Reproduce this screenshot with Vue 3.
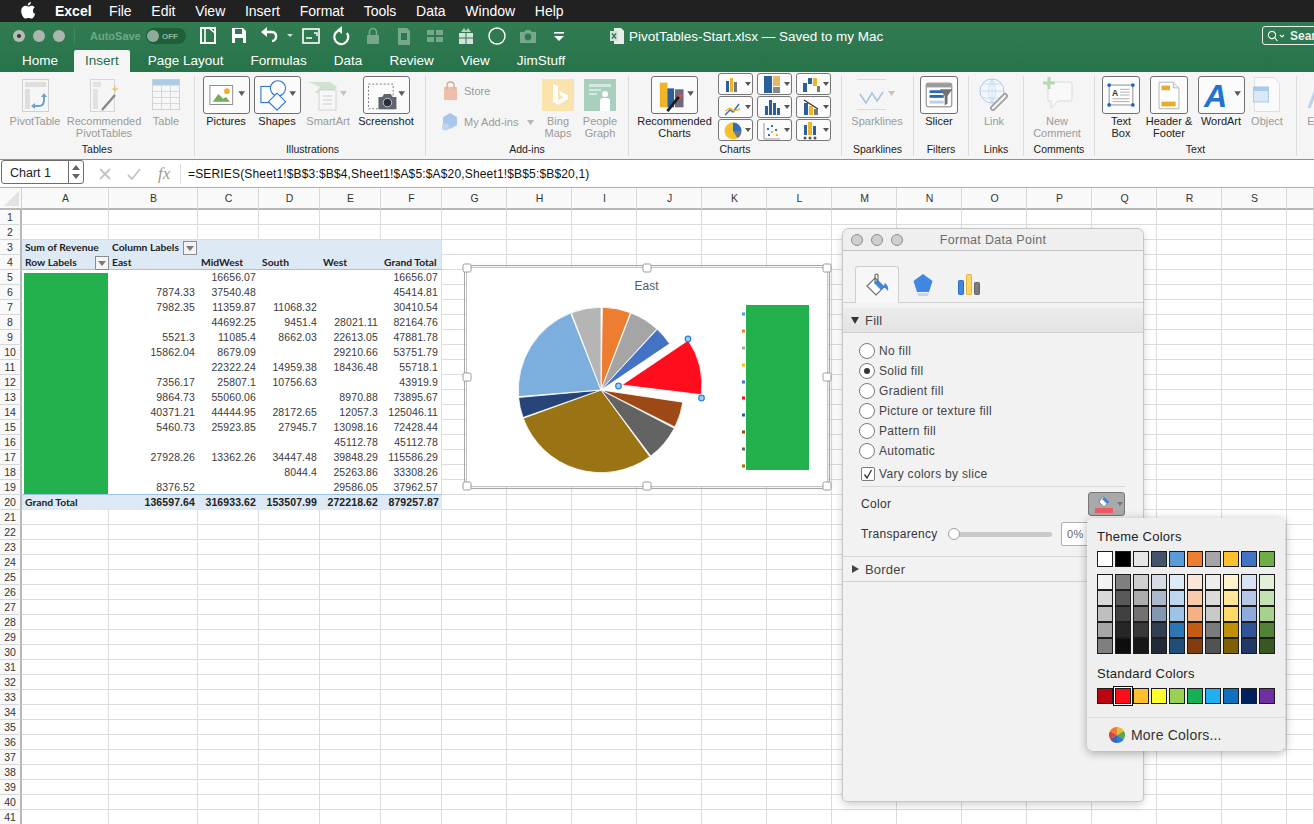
<script setup>
const menus = ['File', 'Edit', 'View', 'Insert', 'Format', 'Tools', 'Data', 'Window', 'Help']
const tabs = ['Home', 'Insert', 'Page Layout', 'Formulas', 'Data', 'Review', 'View', 'JimStuff']

const quick = [
  { w: 31, i: '<rect x="3" y="2" width="14" height="15" fill="none" stroke="#fff" stroke-width="2"/><path d="M7 2v15M11 2l6 5" stroke="#fff" stroke-width="1.6" fill="none"/>' },
  { w: 31, i: '<path d="M3 2h11l3 3v12H3z" fill="#fff"/><rect x="6" y="3" width="7" height="5" fill="#2e7850"/><rect x="6" y="12" width="8" height="5" fill="#2e7850"/>' },
  { w: 41, i: '<path d="M12 15c5 0 6-9 0-9H6" fill="none" stroke="#fff" stroke-width="2.4"/><path d="M7 1v10L1 6z" fill="#fff"/><path d="M27 8h6l-3 3z" fill="#cfe0d6"/>' },
  { w: 31, i: '<rect x="2" y="3" width="16" height="14" fill="none" stroke="#fff" stroke-width="1.6"/><path d="M5 12h6M13 7h3v3" stroke="#fff" stroke-width="1.4" fill="none"/>' },
  { w: 31, i: '<path d="M9 4a7 7 0 1 0 6 3" fill="none" stroke="#fff" stroke-width="2.2"/><path d="M10 0v8l-5-4z" fill="#fff"/>' },
  { w: 31, o: 0.35, i: '<rect x="4" y="9" width="12" height="9" rx="1" fill="#fff"/><path d="M6.5 9V6a3.5 3.5 0 0 1 7 0v3" fill="none" stroke="#fff" stroke-width="1.6"/>' },
  { w: 31, o: 0.35, i: '<path d="M4 2h9l3 3v14H4z" fill="#fff"/><rect x="7" y="7" width="6" height="7" fill="#2e7850"/>' },
  { w: 31, o: 0.35, i: '<rect x="2" y="4" width="7" height="5" fill="#fff"/><rect x="11" y="4" width="7" height="5" fill="#fff"/><rect x="2" y="11" width="7" height="5" fill="#fff"/><rect x="11" y="11" width="7" height="5" fill="#fff"/>' },
  { w: 31, o: 0.8, i: '<path d="M3 7h14v11H3z" fill="#fff"/><path d="M10 7v11M3 12h14" stroke="#2e7850"/><path d="M5 6l3-4 2 3 2-3 3 4z" fill="#dfe9e3"/>' },
  { w: 31, i: '<circle cx="10" cy="10" r="8" fill="none" stroke="#fff" stroke-width="1.4"/>' },
  { w: 31, o: 0.35, i: '<path d="M2 6h4l2-2h4l2 2h4v11H2z" fill="#fff"/><circle cx="10" cy="11" r="3.4" fill="#2e7850"/>' },
  { w: 31, i: '<path d="M5 6h10v1.6H5z" fill="#fff"/><path d="M5 10h10l-5 5z" fill="#fff"/>' }
]

const caret = (x, y, off) => `<path d="M${x} ${y}h7l-3.5 5z" fill="${off ? '#c4c4c4' : '#5a5a5a'}"/>`

const icons = {
  pivot: '<rect x=".5" y="3.5" width="26" height="32" fill="#f6f6f6" stroke="#cfcfcf"/><rect x="3" y="6" width="21" height="5" fill="#dedede"/><rect x="3" y="13" width="5" height="20" fill="#dedede"/><path d="M12 30h5q5 0 5-6v-4" fill="none" stroke="#6ea2cf" stroke-width="2"/><path d="M19 21l3-4 3 4zM13 27v6l-4-3z" fill="#6ea2cf"/>',
  recPivot: '<rect x=".5" y="3.5" width="24" height="32" fill="#f6f6f6" stroke="#d6d6d6"/><rect x="3" y="6" width="8" height="5" fill="#e2e2e2"/><rect x="3" y="13" width="5" height="20" fill="#e2e2e2"/><path d="M12 34l13-15" stroke="#888" stroke-width="2.4"/><path d="M25 9l1 3 3 1-3 1-1 3-1-3-3-1 3-1z" fill="#eac77a"/>',
  table: '<rect x=".5" y="3.5" width="27" height="30" fill="#f7f7f7" stroke="#d2d2d2"/><rect x=".5" y="3.5" width="27" height="6" fill="#aecbe6"/><path d="M9.5 9v24M18.5 9v24M1 15.5h26M1 21.5h26M1 27.5h26" stroke="#d8d8d8"/>',
  pictures: '<rect x="6" y="9" width="24" height="20" fill="#fff" stroke="#8a8a8a"/><circle cx="24" cy="15" r="3" fill="#f2ae2a"/><path d="M9 26l6-8 5 5 3-2 4 5z" fill="#72ad5a"/>',
  shapes: '<rect x="6" y="10" width="17" height="17" fill="#fff" stroke="#2e78c8" stroke-width="1.2"/><circle cx="24" cy="12" r="8" fill="#fff" stroke="#2e78c8" stroke-width="1.2"/><path d="M23 17l9 9-9 9-9-9z" fill="#fff" stroke="#2e78c8" stroke-width="1.2"/>',
  smartart: '<path d="M1 6h22l7 5-6 6H8l5-6z" fill="#cfe3cf"/><rect x="12" y="14" width="17" height="20" fill="#f7f7f7" stroke="#d2d2d2"/><path d="M16 20h9M16 24h9M16 28h9" stroke="#cfcfcf"/>',
  screenshot: '<rect x="4.5" y="7.5" width="26" height="26" fill="none" stroke="#777" stroke-dasharray="2 2"/><path d="M15 21h4l2-3h7l2 3h4v13H15z" fill="#5f6570"/><circle cx="24.5" cy="27" r="4.5" fill="#2a2f38" stroke="#c9ced6"/>',
  bing: '<rect y="3" width="32" height="32" fill="#fbe3ae"/><path d="M11 8l5 2v14l6-3-3-1-2-5 9 4v4l-10 6-5-3z" fill="#fff"/>',
  people: '<rect y="3" width="32" height="32" fill="#a9d0bf"/><path d="M5 8h22v3H5zM5 13h12v2H5zM5 17h8v2H5z" fill="#d6e9e0"/><circle cx="21" cy="18" r="3" fill="#fff"/><path d="M16 35v-10q0-3 3-3h4q3 0 3 3v10z" fill="#fff"/>',
  recCharts: '<rect x="8" y="6" width="8" height="26" fill="#f0b429"/><rect x="16" y="12" width="7" height="20" fill="#2a5f9e"/><rect x="24" y="13" width="9" height="19" fill="#6d6a7d"/><path d="M16 36l12-15" stroke="#1c1c1c" stroke-width="3"/><path d="M30 17l1 2 2 1-2 1-1 2-1-2-2-1 2-1z" fill="#e34d4d"/>',
  sparklines: '<path d="M0 3.5h29M0 33.5h29" stroke="#d3dbe6"/><path d="M3 18l6 9 6-10 5 8 6-9" fill="none" stroke="#a8c4e0" stroke-width="1.6"/>',
  slicer: '<rect x="5.5" y="6.5" width="27" height="25" rx="2" fill="#fff" stroke="#777"/><rect x="6" y="7" width="26" height="4" fill="#9b9b9b"/><rect x="9" y="14" width="15" height="3" fill="#2b69b0"/><rect x="9" y="19" width="15" height="3" fill="#2b69b0"/><rect x="9" y="25" width="15" height="3" fill="#bcd0e6"/><path d="M20 13h13l-5 7v8l-3 2v-10z" fill="#6e7278"/>',
  link: '<circle cx="13" cy="15" r="12" fill="#f4f8fd" stroke="#a9c9ec"/><path d="M1 15h24M13 3v24M4 8h18M4 22h18M13 3q-7 12 0 24M13 3q7 12 0 24" fill="none" stroke="#bcd6f0" stroke-width=".8"/><path d="M14 32l12-12" stroke="#a2a2a2" stroke-width="6" stroke-linecap="round"/><path d="M14 32l12-12" stroke="#f4f4f4" stroke-width="2.4" stroke-linecap="round"/>',
  comment: '<path d="M6 6h22q2 0 2 2v15q0 2-2 2H16l-7 7v-7H6z" fill="#f9f9f9" stroke="#dadada"/><path d="M7 1v12M1 7h12" stroke="#b5d8b5" stroke-width="3"/>',
  textbox: '<rect x="6.5" y="8.5" width="25" height="21" fill="#fff" stroke="#8a8a8a"/><circle cx="6.5" cy="8.5" r="2" fill="#2466c2"/><circle cx="31.5" cy="8.5" r="2" fill="#2466c2"/><circle cx="6.5" cy="29.5" r="2" fill="#2466c2"/><circle cx="31.5" cy="29.5" r="2" fill="#2466c2"/><text x="9.5" y="20" font-family="Liberation Sans" font-size="9" font-weight="700" fill="#333">A</text><path d="M18 13h10M18 16h10M18 19h10M10 23h18M10 26h18" stroke="#aaa"/>',
  header: '<path d="M8.5 5.5h15l6 6v22h-21z" fill="#fff" stroke="#b5b5b5"/><path d="M23.5 5.5v6h6" fill="#eee" stroke="#b5b5b5"/><rect x="11" y="9" width="9" height="5" fill="#e8ab2a"/><rect x="11" y="26" width="15" height="5" fill="#e8ab2a"/>',
  wordart: '<text x="5" y="32" font-family="Liberation Sans" font-size="34" font-weight="700" font-style="italic" fill="#2272cf">A</text>',
  object: '<path d="M1.500 1.500h19l6 6v28h-25z" fill="#fafafa" stroke="#dedede"/><rect x=".5" y="11" width="15" height="15" fill="#d8e8f6" stroke="#a9c9ea"/><rect x=".5" y="11" width="15" height="4" fill="#a9c9ea"/>',
  edit: '<path d="M5 32l9-24" stroke="#bcd2ea" stroke-width="3"/>'
}

const groups = [
  { title: 'Tables', w: 195, tools: [
    { w: 70, iw: 27, i: 'pivot', off: true, label: ['PivotTable'] },
    { w: 68, iw: 29, i: 'recPivot', off: true, label: ['Recommended', 'PivotTables'] },
    { w: 56, iw: 28, i: 'table', off: true, label: ['Table'] }
  ] },
  { title: 'Illustrations', w: 231, pad: 5, tools: [
    { w: 52, iw: 47, i: 'pictures', box: true, car: 36, label: ['Pictures'] },
    { w: 50, iw: 47, i: 'shapes', box: true, car: 36, label: ['Shapes'] },
    { w: 52, iw: 42, i: 'smartart', off: true, car: 33, label: ['SmartArt'] },
    { w: 64, iw: 47, i: 'screenshot', box: true, car: 36, label: ['Screenshot'] }
  ] },
  { title: 'Add-ins', w: 203, addins: true, tools: [
    { w: 42, iw: 32, i: 'bing', off: true, label: ['Bing', 'Maps'] },
    { w: 42, iw: 32, i: 'people', off: true, label: ['People', 'Graph'] }
  ] },
  { title: 'Charts', w: 213, charts: true, tools: [
    { w: 91, iw: 47, i: 'recCharts', box: true, car: 37, label: ['Recommended', 'Charts'] }
  ] },
  { title: 'Sparklines', w: 72, tools: [
    { w: 70, iw: 40, i: 'sparklines', off: true, car: 31, label: ['Sparklines'] }
  ] },
  { title: 'Filters', w: 55, tools: [{ w: 50, iw: 38, i: 'slicer', box: true, label: ['Slicer'] }] },
  { title: 'Links', w: 55, tools: [{ w: 50, iw: 30, i: 'link', off: true, label: ['Link'] }] },
  { title: 'Comments', w: 71, tools: [{ w: 66, iw: 31, i: 'comment', off: true, label: ['New', 'Comment'] }] },
  { title: 'Text', w: 202, tools: [
    { w: 52, iw: 38, i: 'textbox', box: true, label: ['Text', 'Box'] },
    { w: 44, iw: 38, i: 'header', box: true, label: ['Header &', 'Footer'] },
    { w: 60, iw: 47, i: 'wordart', box: true, car: 37, label: ['WordArt'] },
    { w: 32, iw: 28, i: 'object', off: true, label: ['Object'] }
  ] }
]

const miniCharts = [
  '<rect x="3" y="7" width="3" height="11" fill="#2a5f9e"/><rect x="7" y="4" width="3" height="14" fill="#f0b429"/><rect x="11" y="8" width="3" height="10" fill="#777"/>',
  '<rect x="2" y="2" width="8" height="17" fill="#2a5f9e"/><rect x="11" y="2" width="7" height="10" fill="#eab765"/><rect x="11" y="13" width="7" height="6" fill="#8a8a8a"/>',
  '<path d="M2 9h4v9H2zM7 4h4v6H7z" fill="#2a5f9e"/><path d="M12 4h4v8h-4z" fill="#f0b429"/><rect x="16" y="12" width="3" height="6" fill="#777"/>',
  '<path d="M2 18l5-5 3 2 6-8" fill="none" stroke="#2a6fc0" stroke-width="1.4"/><path d="M2 14l5-3 4 3 6-2" fill="none" stroke="#f0b429" stroke-width="1.4"/>',
  '<rect x="3" y="9" width="3" height="9" fill="#2a5f9e"/><rect x="7" y="3" width="3" height="15" fill="#2a5f9e"/><rect x="11" y="6" width="3" height="12" fill="#2a5f9e"/><rect x="15" y="11" width="3" height="7" fill="#2a5f9e"/>',
  '<path d="M3 3l14 9" stroke="#333" stroke-width="1.2"/><rect x="3" y="6" width="4" height="12" fill="#2a5f9e"/><rect x="8" y="9" width="4" height="9" fill="#f0b429"/><rect x="13" y="12" width="4" height="6" fill="#777"/>',
  '<circle cx="10" cy="11" r="8.500" fill="#f5c12e"/><path d="M10 11V2.500a8.500 8.500 0 0 1 8.500 8.500z" fill="#2a6fc0"/><path d="M10 11h8.500a8.500 8.500 0 0 1-4 7.200z" fill="#777"/>',
  '<path d="M2 3v16h16" fill="none" stroke="#999"/><path d="M5 8h2v2H5zM9 5h2v2H9zM13 9h2v2h-2zM6 14h2v2H6z" fill="#2a6fc0"/><path d="M9 11h2v2H9zM14 14h2v2h-2z" fill="#f0b429"/>',
  '<rect x="3" y="5" width="3" height="10" fill="#2a5f9e"/><rect x="7" y="2" width="4" height="13" fill="#f0b429"/><rect x="12" y="6" width="3" height="9" fill="#2a5f9e"/><circle cx="4" cy="18" r="1.500" fill="#555"/><circle cx="9" cy="18" r="1.500" fill="#555"/><circle cx="14" cy="18" r="1.500" fill="#555"/>'
]

const colWidths = [87, 89, 61, 61, 61, 61, ...Array(13).fill(65), 27]
const colNames = ['A', 'B', 'C', 'D', 'E', 'F', 'G', 'H', 'I', 'J', 'K', 'L', 'M', 'N', 'O', 'P', 'Q', 'R', 'S', '']
const rowNums = Array.from({ length: 41 }, (_, i) => i + 1)

const pivot = {
  3: ['Sum of Revenue', 'Column Labels', '', '', '', ''],
  4: ['Row Labels', 'East', 'MidWest', 'South', 'West', 'Grand Total'],
  5: ['', '', '16656.07', '', '', '16656.07'],
  6: ['', '7874.33', '37540.48', '', '', '45414.81'],
  7: ['', '7982.35', '11359.87', '11068.32', '', '30410.54'],
  8: ['', '', '44692.25', '9451.4', '28021.11', '82164.76'],
  9: ['', '5521.3', '11085.4', '8662.03', '22613.05', '47881.78'],
  10: ['', '15862.04', '8679.09', '', '29210.66', '53751.79'],
  11: ['', '', '22322.24', '14959.38', '18436.48', '55718.1'],
  12: ['', '7356.17', '25807.1', '10756.63', '', '43919.9'],
  13: ['', '9864.73', '55060.06', '', '8970.88', '73895.67'],
  14: ['', '40371.21', '44444.95', '28172.65', '12057.3', '125046.11'],
  15: ['', '5460.73', '25923.85', '27945.7', '13098.16', '72428.44'],
  16: ['', '', '', '', '45112.78', '45112.78'],
  17: ['', '27928.26', '13362.26', '34447.48', '39848.29', '115586.29'],
  18: ['', '', '', '8044.4', '25263.86', '33308.26'],
  19: ['', '8376.52', '', '', '29586.05', '37962.57'],
  20: ['Grand Total', '136597.64', '316933.62', '153507.99', '272218.62', '879257.87']
}

function cellClass(r, c) {
  const inPivot = c < 6
  return {
    head: inPivot && (r === 3 || r === 4),
    headLast: inPivot && r === 4,
    plain: inPivot && r >= 5 && r <= 19,
    lastCol: c === 5,
    total: inPivot && r === 20,
    totalLabel: c === 0 && r === 20,
    aboveTotal: inPivot && r === 19,
    num: inPivot && r >= 5 && c > 0
  }
}

// slices go clockwise, angles in degrees from twelve o'clock
const pie = [
  { a: 1, b: 20.8, c: '#ed7d31' },
  { a: 21.3, b: 42.4, c: '#a5a5a5' },
  { a: 42.8, b: 56, c: '#4472c4' },
  { a: 56, b: 97, c: '#ff0d1c', out: 21.500, r: 80 },
  { a: 98.5, b: 116.6, c: '#9e4816' },
  { a: 117.6, b: 143, c: '#636363' },
  { a: 143.8, b: 250, c: '#997314' },
  { a: 250.6, b: 264.8, c: '#264478' },
  { a: 265.4, b: 338.4, c: '#7cafdd' },
  { a: 339, b: 360, c: '#b5b5b5' }
]

function polar(cx, cy, r, deg) {
  const t = (deg * Math.PI) / 180
  return [(cx + r * Math.sin(t)).toFixed(1), (cy - r * Math.cos(t)).toFixed(1)]
}

function slicePath(s) {
  const r = s.r || 82.7
  const [ox, oy] = s.out ? polar(601, 390, s.out, (s.a + s.b) / 2) : [601, 390]
  const p0 = polar(+ox, +oy, r, s.a)
  const p1 = polar(+ox, +oy, r, s.b)
  const big = s.b - s.a > 180 ? 1 : 0
  return `M${ox} ${oy}L${p0[0]} ${p0[1]}A${r} ${r} 0 ${big} 1 ${p1[0]} ${p1[1]}Z`
}

const legend = [
  [314, '#5b9bd5'], [331, '#ed7d31'], [348, '#a5a5a5'], [365, '#ffc000'], [382, '#4472c4'],
  [398, '#ff0d1c'], [415, '#255e91'], [432, '#9e480e'], [449, '#636363'], [466, '#997300']
]

const handles = [
  [0, 0], [50, 0], [100, 0], [0, 50], [100, 50], [0, 100], [50, 100], [100, 100]
]

const fills = [
  { label: 'No fill' },
  { label: 'Solid fill', on: true },
  { label: 'Gradient fill' },
  { label: 'Picture or texture fill' },
  { label: 'Pattern fill' },
  { label: 'Automatic' }
]

const themeRow = ['#ffffff', '#000000', '#e7e6e6', '#44546a', '#5b9bd5', '#ed7d31', '#a5a5a5', '#ffc02e', '#4472c4', '#70ad47']
const shades = [
  '#f2f2f2', '#d9d9d9', '#bfbfbf', '#a6a6a6', '#7f7f7f',
  '#7f7f7f', '#595959', '#404040', '#262626', '#0d0d0d',
  '#d0cece', '#aeabab', '#767171', '#3b3838', '#181717',
  '#d6dce5', '#adb9ca', '#8497b0', '#333f50', '#222a35',
  '#deebf7', '#bdd7ee', '#9dc3e6', '#2e75b6', '#1f4e79',
  '#fbe5d6', '#f8cbad', '#f4b183', '#c55a11', '#843c0c',
  '#ededed', '#dbdbdb', '#c9c9c9', '#7b7b7b', '#525252',
  '#fff2cc', '#ffe699', '#ffd966', '#bf9000', '#7f6000',
  '#dae3f3', '#b4c7e7', '#8faadc', '#2f5597', '#203864',
  '#e2f0d9', '#c5e0b4', '#a9d18e', '#548235', '#385723'
]
const standard = ['#bb0612', '#ff0d1c', '#ffc02e', '#ffff2e', '#99d152', '#17b052', '#1fb0f0', '#1070bd', '#00205f', '#6e30a0']
</script>

<template>
  <div class="page">
    <div class="menubar">
      <svg class="apple" width="16" height="18" viewBox="0 0 16 18">
        <path d="M11 1c0 2-1.600 3.500-3.300 3.400C7.600 2.600 9.300 1.100 11 1zM13 9.500c0-2 1.500-3 1.700-3.100-1-1.400-2.400-1.600-3-1.600-1.300-.1-2.500.8-3.100.8-.7 0-1.700-.8-2.800-.8C4.300 4.800 1.200 6 1.200 10.200c0 3.300 2.500 7.400 4.400 7.400 1 0 1.600-.7 2.900-.7s1.800.7 2.900.7c1.800 0 3.300-3.200 3.700-4.700-2-.8-2.100-2.700-2.100-3.400z" fill="#fff"/>
      </svg>
      <span class="app-name">Excel</span>
      <span v-for="m in menus" :key="m" class="menu">{{ m }}</span>
    </div>

    <div class="titlebar">
      <div class="title-row">
        <div class="lights">
          <span class="light dot"></span>
          <span class="light"></span>
          <span class="light"></span>
        </div>
        <span class="autosave">AutoSave</span>
        <span class="toggle"><i></i>OFF</span>
        <div class="quick">
          <span v-for="(q, n) in quick" :key="n" class="quick-slot" :style="{ width: q.w + 'px', opacity: q.o || 1 }">
            <svg :width="q.w - 3" height="20" :viewBox="`0 0 ${q.w - 3} 20`" v-html="q.i"></svg>
          </span>
        </div>
        <div class="docname">
          <svg width="14" height="16" viewBox="0 0 14 16">
            <path d="M4 0h7l3 3v13H4z" fill="#e6efe9"/>
            <rect y="3" width="8" height="10" fill="#cfe0d6"/>
            <path d="M2 5.500l4 5M6 5.500l-4 5" stroke="#2e7850" stroke-width="1.300"/>
          </svg>
          <span>PivotTables-Start.xlsx — Saved to my Mac</span>
        </div>
        <div class="search">
          <svg width="20" height="12" viewBox="0 0 20 12">
            <circle cx="5" cy="5" r="3.600" fill="none" stroke="#fff" stroke-width="1.100"/>
            <path d="M7.500 7.500l3 3.500M13 5l2 2 2-2" fill="none" stroke="#fff" stroke-width="1.100"/>
          </svg>
          <span>Search</span>
        </div>
      </div>
      <div class="tabs">
        <span v-for="t in tabs" :key="t" class="tab" :class="{ active: t === 'Insert' }">{{ t }}</span>
      </div>
    </div>

    <div class="ribbon">
      <section v-for="g in groups" :key="g.title" class="group" :style="{ width: g.w + 'px', paddingLeft: (g.pad || 0) + 'px' }">
        <div class="tools">
          <div v-if="g.addins" class="addin-stack">
            <div class="addin-row">
              <svg width="17" height="20" viewBox="0 0 17 20">
                <path d="M2 6h13v13H2z" fill="#ecbfab"/>
                <path d="M5 8V4q0-3 3.500-3T12 4v4" fill="none" stroke="#dba68f" stroke-width="1.300"/>
              </svg>
              <span>Store</span>
            </div>
            <div class="addin-row">
              <svg width="17" height="20" viewBox="0 0 17 20">
                <path d="M8 1l7 4v8l-7 4-7-4V5z" fill="#a8c7ea"/>
                <circle cx="3.500" cy="15" r="3.500" fill="#bdd5f0"/>
              </svg>
              <span>My Add-ins</span>
              <svg class="addin-caret" width="7" height="5" viewBox="0 0 7 5"><path d="M0 0h7L3.500 5z" fill="#b5b5b5"/></svg>
            </div>
          </div>
          <div v-for="t in g.tools" :key="t.i" class="tool" :class="{ off: t.off }" :style="{ width: t.w + 'px' }">
            <div class="tool-icon" :class="{ box: t.box }" :style="{ width: t.iw + 'px' }">
              <svg :width="t.box ? t.iw - 2 : t.iw" :height="t.box ? 36 : 38" :viewBox="`0 0 ${t.iw} 38`"
                v-html="icons[t.i] + (t.car ? caret(t.car, 15, t.off) : '')"></svg>
            </div>
            <span v-for="l in t.label" :key="l" class="tool-label">{{ l }}</span>
          </div>
          <div v-if="g.charts" class="mini-grid">
            <span v-for="(m, n) in miniCharts" :key="n" class="mini">
              <svg width="20" height="20" viewBox="0 0 20 20" v-html="m"></svg>
              <svg width="6" height="4" viewBox="0 0 6 4"><path d="M0 0h6L3 4z" fill="#555"/></svg>
            </span>
          </div>
        </div>
        <div class="group-title">{{ g.title }}</div>
      </section>
      <section class="group last">
        <div class="tool off">
          <div class="tool-icon"><svg width="20" height="38" viewBox="0 0 20 38" v-html="icons.edit"></svg></div>
          <span class="tool-label">Ed</span>
        </div>
      </section>
    </div>

    <div class="formula-bar">
      <div class="namebox">
        <span class="name-text">Chart 1</span>
        <div class="stepper">
          <svg width="8" height="16" viewBox="0 0 8 16">
            <path d="M0 6l4-5 4 5zM0 10h8l-4 5z" fill="#666"/>
          </svg>
        </div>
      </div>
      <svg class="fx-btn" width="14" height="14" viewBox="0 0 14 14"><path d="M2 2l10 10M12 2L2 12" stroke="#c4c4c4" stroke-width="1.800"/></svg>
      <svg class="fx-btn check" width="16" height="14" viewBox="0 0 16 14"><path d="M2 8l4 4 8-10" fill="none" stroke="#c4c4c4" stroke-width="1.800"/></svg>
      <span class="fx">fx</span>
      <span class="formula">=SERIES(Sheet1!$B$3:$B$4,Sheet1!$A$5:$A$20,Sheet1!$B$5:$B$20,1)</span>
    </div>

    <div class="sheet">
      <div class="corner"><i></i></div>
      <div v-for="(w, c) in colWidths" :key="c" class="col-head">{{ colNames[c] }}</div>
      <template v-for="r in rowNums" :key="r">
        <div class="row-head">{{ r }}</div>
        <div v-for="(w, c) in colWidths" :key="c" class="cell" :class="cellClass(r, c)">
          <span>{{ pivot[r] ? pivot[r][c] : '' }}</span>
        </div>
      </template>
      <div class="filter-btn col-filter"><i></i></div>
      <div class="filter-btn row-filter"><i></i></div>
      <div class="redacted"></div>
    </div>

    <div class="chart">
      <svg class="chart-svg" width="360" height="218" viewBox="467 268 360 218">
        <path v-for="s in pie" :key="s.c" :d="slicePath(s)" :fill="s.c" stroke="#fff" stroke-width=".8" />
        <text x="646.500" y="290" text-anchor="middle" class="chart-title">East</text>
        <rect v-for="l in legend" :key="l[0]" x="742" :y="l[0] - 1.500" width="3" height="3" :fill="l[1]" />
        <rect x="746" y="305" width="63" height="165" fill="#23b14d" />
        <g fill="#9ccbf0" stroke="#2a83d8" stroke-width="1.200">
          <circle cx="688" cy="339" r="2.800" />
          <circle cx="701.500" cy="398" r="2.800" />
          <circle cx="618.500" cy="386" r="2.800" />
        </g>
      </svg>
      <span v-for="h in handles" :key="h.join()" class="handle" :style="{ left: h[0] + '%', top: h[1] + '%' }"></span>
    </div>

    <div class="panel">
      <div class="panel-title">
        <div class="panel-lights"><i></i><i></i><i></i></div>
        <span>Format Data Point</span>
      </div>
      <div class="panel-tabs">
        <div class="panel-tab active">
          <svg width="26" height="26" viewBox="0 0 26 26">
            <path d="M11 6l9 9-8 8-9-9z" fill="#fff" stroke="#6d6d6d" stroke-width="1.200"/>
            <path d="M13 8l7 7-3 3-7-7z" fill="#3f87d8"/>
            <path d="M11 11V3q2-2 3 0v6" fill="none" stroke="#666" stroke-width="1.100"/>
            <path d="M21 11q4 3 3 8-2-3-5-4z" fill="#3f87d8"/>
          </svg>
        </div>
        <div class="panel-tab">
          <svg width="22" height="26" viewBox="0 0 22 26">
            <path d="M11 2l9.500 7-3.500 11H5L1.500 9z" fill="#3f87e0"/>
            <path d="M5 21h12l-1.500 3h-9z" fill="#bcd6f3"/>
          </svg>
        </div>
        <div class="panel-tab">
          <svg width="24" height="22" viewBox="0 0 24 22">
            <rect x="1.500" y="6.500" width="5" height="14" rx=".8" fill="#3f87e0" stroke="#2f6fc0"/>
            <rect x="9.500" y=".5" width="5" height="20" rx=".8" fill="#fcd664" stroke="#e3b63c"/>
            <rect x="17.500" y="8.500" width="5" height="12" rx=".8" fill="#7c7c7c" stroke="#666"/>
          </svg>
        </div>
      </div>

      <div class="section-head open"><i></i>Fill</div>
      <div class="section-body">
        <label v-for="f in fills" :key="f.label" class="radio-row">
          <span class="radio" :class="{ on: f.on }"></span>{{ f.label }}
        </label>
        <label class="check-row">
          <span class="checkbox">
            <svg width="12" height="12" viewBox="0 0 12 12"><path d="M2.500 6.500l2.500 3.500 4.500-8" fill="none" stroke="#333" stroke-width="1.300"/></svg>
          </span>Vary colors by slice
        </label>
        <div class="rule"></div>
        <div class="color-row">
          <span>Color</span>
          <div class="color-btn">
            <svg width="20" height="20" viewBox="0 0 20 20">
              <path d="M9 2l6 6-5 5-5-5z" fill="#fff" stroke="#777" stroke-width=".8"/>
              <path d="M10 3l5 5-2 2-5-5z" fill="#3f87d8"/>
              <rect x="1" y="14" width="18" height="5" fill="#ee5a66"/>
            </svg>
            <svg width="6" height="4" viewBox="0 0 6 4"><path d="M0 0h6L3 4z" fill="#777"/></svg>
          </div>
        </div>
        <div class="transparency-row">
          <span>Transparency</span>
          <div class="slider"><i></i></div>
          <div class="percent">0%</div>
        </div>
      </div>
      <div class="section-head closed"><i></i>Border</div>
    </div>

    <div class="popover">
      <div class="pop-title">Theme Colors</div>
      <div class="swatches">
        <span v-for="c in themeRow" :key="c" class="swatch" :style="{ background: c }"></span>
      </div>
      <div class="swatches shades">
        <span v-for="(c, n) in shades" :key="n" class="swatch" :style="{ background: c }"></span>
      </div>
      <div class="pop-title standard-title">Standard Colors</div>
      <div class="swatches">
        <span v-for="c in standard" :key="c" class="swatch" :class="{ picked: c === '#ff0d1c' }" :style="{ background: c }"></span>
      </div>
      <div class="more">
        <svg width="16" height="16" viewBox="0 0 16 16">
          <path d="M8 8V0a8 8 0 0 1 6.900 4z" fill="#f5b92e"/>
          <path d="M8 8l6.900-4a8 8 0 0 1 0 8z" fill="#58a845"/>
          <path d="M8 8l6.900 4A8 8 0 0 1 8 16z" fill="#2d7fd0"/>
          <path d="M8 8v8a8 8 0 0 1-6.900-4z" fill="#3a62b8"/>
          <path d="M8 8l-6.900 4a8 8 0 0 1 0-8z" fill="#d8433b"/>
          <path d="M8 8L1.100 4A8 8 0 0 1 8 0z" fill="#ee7d31"/>
        </svg>
        <span>More Colors...</span>
      </div>
    </div>
  </div>
</template>

<style>
html, body { margin: 0; overflow: hidden; background: #fff; }
</style>

<style scoped>
.page {
  position: relative;
  width: 1314px;
  height: 824px;
  overflow: hidden;
  display: flex;
  flex-direction: column;
  font-family: "Liberation Sans", Arial, sans-serif;
  color: #222;
}

.menubar {
  flex: none;
  height: 22px;
  background: #212121;
  color: #fff;
  display: flex;
  align-items: center;
  font-size: 14px;
  padding-left: 20px;
}
.apple { margin-right: 19px; margin-top: -2px; }
.app-name { font-weight: 700; margin-right: 17.500px; }
.menu { margin-right: 19.700px; }

.titlebar {
  flex: none;
  height: 50px;
  background: linear-gradient(#327c52, #27734a);
}
.title-row {
  height: 28px;
  display: flex;
  align-items: center;
  padding-top: 0;
  position: relative;
}
.lights { display: flex; gap: 8px; margin-left: 13px; padding-right: 9px; border-right: 1px solid #3d8a5e; height: 18px; align-items: center; }
.light { width: 12px; height: 12px; border-radius: 50%; background: #a9b5ad; box-sizing: border-box; position: relative; }
.light.dot { background: #b5bdb8; }
.light.dot::after { content: ""; position: absolute; left: 4px; top: 4px; width: 4px; height: 4px; border-radius: 50%; background: #333; }
.autosave { margin-left: 15px; font-size: 11px; font-weight: 700; color: #6fa888; width: 56px; }
.toggle {
  width: 40px; height: 16px; border-radius: 8px; background: #1f6039; box-sizing: border-box;
  display: flex; align-items: center; gap: 3px; padding-left: 1px; color: #8fb8a1; font-size: 8px; font-weight: 700;
}
.toggle i { width: 12px; height: 12px; border-radius: 50%; background: #8fa99a; }
.quick { display: flex; margin-left: 10px; }
.quick-slot { display: flex; justify-content: center; align-items: center; }
.docname { position: absolute; left: 610px; top: 6px; display: flex; align-items: center; gap: 5px; color: #fff; font-size: 13.500px; }
.search {
  position: absolute; left: 1262px; top: 4px; width: 80px; height: 19px; box-sizing: border-box;
  border: 1px solid #e8f0eb; border-radius: 3px; display: flex; align-items: center; gap: 3px; padding-left: 4px;
  color: #e8f0eb; font-size: 12px; font-weight: 700;
}

.tabs { height: 22px; display: flex; padding-left: 8.500px; }
.tab { padding: 0 13.500px; line-height: 21px; color: #fff; font-size: 13.500px; }
.tab.active { background: #f5f5f5; color: #1f6e45; padding: 0 11px; margin: 0 4.500px 0 2.500px; border-radius: 2px 2px 0 0; }

.ribbon {
  flex: none;
  height: 88px;
  box-sizing: border-box;
  background: #f5f5f5;
  border-bottom: 1px solid #8f8f8f;
  display: flex;
  overflow: hidden;
}
.group { flex: none; box-sizing: border-box; height: 80px; margin-top: 4px; border-right: 1px solid #dcdcdc; display: flex; flex-direction: column; }
.group.last { border: 0; padding-left: 4px; width: 30px; }
.tools { flex: 1; display: flex; min-height: 0; }
.group-title { height: 13px; text-align: center; font-size: 10.500px; line-height: 13px; color: #222; }
.tool { flex: none; display: flex; flex-direction: column; align-items: center; font-size: 11px; line-height: 12px; white-space: nowrap; }
.tool.off { color: #9a9a9a; }
.tool-icon { height: 38px; margin-bottom: 1px; box-sizing: border-box; display: flex; justify-content: center; align-items: center; }
.tool-icon.box { border: 1px solid #707070; border-radius: 3px; background: #fbfbfb; }
.tool-label { display: block; height: 12px; }

.addin-stack { flex: none; width: 111px; box-sizing: border-box; padding: 5px 0 0 16px; display: flex; flex-direction: column; gap: 11px; color: #9a9a9a; font-size: 11px; }
.addin-row { display: flex; align-items: center; gap: 5px; height: 20px; }
.addin-caret { margin-left: 4px; }

.mini-grid { flex: none; margin: -3px 0 0 -2px; display: grid; grid-template-columns: repeat(3, 35px); grid-auto-rows: 22px; column-gap: 4px; row-gap: 1px; }
.mini { box-sizing: border-box; border: 1px solid #777; border-radius: 3px; background: #fbfbfb; display: flex; align-items: center; gap: 2px; padding-left: 4px; }

.formula-bar {
  flex: none;
  height: 28px;
  box-sizing: border-box;
  background: #fff;
  border-bottom: 1px solid #aeaeae;
  display: flex;
  align-items: center;
  font-size: 12px;
}
.namebox {
  margin: 0 0 3px 1px; width: 83px; height: 24px; box-sizing: border-box;
  border: 1px solid #6e6e6e; border-radius: 3px; display: flex; align-items: center; justify-content: space-between; padding-left: 8px; color: #222; font-size: 12.500px;
}
.name-text { padding-top: 2px; }
.stepper { width: 14px; height: 100%; border-left: 1px solid #6e6e6e; display: flex; align-items: center; justify-content: center; }
.fx-btn { margin-left: 14px; }
.fx-btn.check { margin-left: 14px; }
.fx { width: 28px; margin-left: 11px; padding-left: 5px; box-sizing: border-box; border-right: 1px solid #ddd; font-family: "Liberation Serif", serif; font-style: italic; font-size: 17px; color: #9c9c9c; line-height: 20px; }
.formula { margin-left: 7px; letter-spacing: .16px; color: #111; }

.sheet {
  position: relative;
  flex: none;
  height: 636px;
  display: grid;
  grid-template-columns: 22px 87px 89px 61px 61px 61px 61px repeat(13, 65px) 27px;
  grid-template-rows: 22px repeat(41, 15px);
  overflow: hidden;
  font-size: 10.500px;
  color: #333;
}
.corner { background: #f9f9f9; border-right: 1px solid #d0d0d0; border-bottom: 2px solid #b8b8b8; box-sizing: border-box; position: relative; }
.corner i { position: absolute; right: 2px; bottom: 2px; border-style: solid; border-width: 0 0 15px 15px; border-color: transparent transparent #e2e2e2 transparent; }
.col-head {
  background: #f9f9f9; box-sizing: border-box; border-right: 1px solid #d8d8d8; border-bottom: 2px solid #b8b8b8; padding-left: 1px;
  display: flex; align-items: center; justify-content: center; font-size: 10.500px; color: #333;
}
.row-head {
  background: #f9f9f9; box-sizing: border-box; border-right: 2px solid #b8b8b8; border-bottom: 1px solid #d8d8d8;
  display: flex; align-items: center; justify-content: center; font-size: 10.500px; color: #333;
}
.cell {
  box-sizing: border-box; border-right: 1px solid #dcdcdc; border-bottom: 1px solid #dcdcdc;
  line-height: 15px; padding: 0 3px; white-space: nowrap;
}
.cell.head { background: #dde9f5; border-right: 0; border-bottom: 0; font-family: Lato, sans-serif; font-size: 10.300px; font-weight: 700; color: #222; }
.cell.headLast { border-bottom: 1px solid #9dc3e6; }
.cell.plain { border-right: 0; border-bottom: 0; }
.cell.lastCol { border-right: 1px solid #dcdcdc; }
.cell.aboveTotal { border-bottom: 1px solid #9dc3e6; }
.cell.total { background: #dde9f5; border-right: 0; border-bottom: 0; font-weight: 700; color: #222; }
.cell.totalLabel { font-family: Lato, sans-serif; font-size: 10.300px; }
.cell.num { text-align: right; letter-spacing: .1px; color: #3a3a3a; }
.cell.total.num { color: #222; }

.filter-btn { position: absolute; width: 14px; height: 14px; box-sizing: border-box; border: 1px solid #8c8c8c; background: #f4f4f4; display: flex; align-items: center; justify-content: center; }
.filter-btn i { border-style: solid; border-width: 5px 4px 0; border-color: #7a7a7a transparent transparent; }
.col-filter { left: 183px; top: 53px; }
.row-filter { left: 95px; top: 68px; }
.redacted { position: absolute; left: 24px; top: 85px; width: 84px; height: 221px; background: #23b14d; }

.chart {
  position: absolute;
  left: 466px;
  top: 267px;
  width: 362px;
  height: 220px;
  box-sizing: border-box;
  background: #fff;
  border: 1px solid #c4c4c4;
  outline: 1px solid #a8a8a8;
  outline-offset: 1px;
  box-shadow: 4px 0 8px rgba(0, 0, 0, .08);
}
.chart-svg { display: block; }
.chart-title { font-family: "Liberation Sans", sans-serif; font-size: 12px; fill: #595959; }
.handle { position: absolute; width: 9px; height: 9px; box-sizing: border-box; background: #fff; border: 1px solid #9a9a9a; border-radius: 2px; transform: translate(-50%, -50%); }

.panel {
  position: absolute;
  left: 843px;
  top: 229px;
  width: 300px;
  height: 572px;
  box-sizing: border-box;
  background: #f2f2f2;
  border-radius: 6px 6px 4px 4px;
  box-shadow: 0 0 0 1px #c6c6c6, 0 3px 10px rgba(0, 0, 0, .22);
  font-size: 12px;
  letter-spacing: .3px;
  color: #444;
}
.panel-title {
  height: 22px; box-sizing: border-box; border-bottom: 1px solid #c4c4c4; background: #efefef; border-radius: 6px 6px 0 0;
  position: relative; text-align: center; line-height: 22px; color: #6b6b6b; font-size: 12.500px;
}
.panel-lights { position: absolute; left: 8px; top: 5px; display: flex; gap: 8px; }
.panel-lights i { width: 12px; height: 12px; box-sizing: border-box; border-radius: 50%; background: #cfcfcf; border: 1px solid #8e8e8e; }
.panel-tabs { height: 52px; box-sizing: border-box; padding: 15px 0 0 12px; display: flex; gap: 2px; border-bottom: 1px solid #d2d2d2; }
.panel-tab { width: 44px; height: 37px; box-sizing: border-box; display: flex; align-items: center; justify-content: center; }
.panel-tab.active { background: #f7f7f7; border: 1px solid #cfcfcf; border-bottom: 0; border-radius: 3px 3px 0 0; height: 37px; }
.section-head {
  height: 25px; box-sizing: border-box; display: flex; align-items: center; padding-left: 8px; gap: 6px;
  background: linear-gradient(#ececec, #e3e3e3); border-bottom: 1px solid #d2d2d2; font-size: 13px; color: #444; letter-spacing: .2px;
}
.section-head.open { margin-top: 5px; }
.section-head.open i { border-style: solid; border-width: 7px 4px 0; border-color: #333 transparent transparent; }
.section-head.closed { background: #f2f2f2; padding-left: 9px; }
.section-head.closed i { border-style: solid; border-width: 4px 0 4px 7px; border-color: transparent transparent transparent #444; }
.section-body { padding: 8px 18px 0 18px; border-bottom: 1px solid #d8d8d8; height: 224px; box-sizing: border-box; }
.radio-row { height: 20px; display: flex; align-items: center; gap: 3px; }
.radio { width: 16px; height: 16px; margin-left: -2px; margin-right: 1px; box-sizing: border-box; border: 1px solid #7a7a7a; border-radius: 50%; background: #fff; position: relative; }
.radio.on::after { content: ""; position: absolute; left: 4px; top: 4px; width: 6px; height: 6px; border-radius: 50%; background: #333; }
.check-row { height: 20px; margin-top: 3px; display: flex; align-items: center; gap: 4px; }
.checkbox { width: 14px; height: 14px; box-sizing: border-box; border: 1px solid #7a7a7a; border-radius: 2px; background: #fff; display: flex; align-items: center; justify-content: center; }
.rule { height: 1px; background: #d8d8d8; margin-top: 2px; }
.color-row { margin-top: 5px; height: 24px; display: flex; align-items: center; justify-content: space-between; color: #333; }
.color-btn { width: 37px; height: 24px; box-sizing: border-box; background: #a9a9a9; border: 1px solid #777; border-radius: 3px; display: flex; align-items: center; padding-left: 5px; gap: 3px; }
.transparency-row { margin-top: 6px; height: 24px; display: flex; align-items: center; color: #333; }
.transparency-row > span { width: 87px; }
.slider { width: 104px; height: 5px; background: #c9c9c9; border-radius: 3px; position: relative; }
.slider i { position: absolute; left: 0; top: -4px; width: 12px; height: 12px; box-sizing: border-box; background: #fff; border: 1px solid #a0a0a0; border-radius: 50%; }
.percent { margin-left: 9px; width: 64px; height: 24px; box-sizing: border-box; background: #fff; border: 1px solid #b0b0b0; border-radius: 2px; padding-left: 5px; line-height: 22px; color: #666; font-size: 11px; }

.popover {
  position: absolute;
  left: 1087px;
  top: 518px;
  width: 198px;
  height: 233px;
  box-sizing: border-box;
  padding-top: 11px;
  background: #efefef;
  border-radius: 6px;
  box-shadow: 0 2px 10px rgba(0, 0, 0, .32);
}
.pop-title { margin-left: 10px; height: 16px; line-height: 16px; font-size: 13px; letter-spacing: .25px; color: #222; }
.standard-title { margin-top: 12px; }
.swatches { margin: 6px 0 0 10px; display: grid; grid-template-columns: repeat(10, 16px); column-gap: 2px; }
.swatches.shades { margin-top: 7px; grid-template-rows: repeat(5, 16px); grid-auto-flow: column; }
.swatch { width: 16px; height: 16px; box-sizing: border-box; border: 1px solid #1c1c1c; }
.swatch.picked { box-shadow: 0 0 0 1px #fff, 0 0 0 2px #111; }
.more { margin-top: 13px; border-top: 1px solid #dcdcdc; height: 33px; display: flex; align-items: center; padding-left: 22px; gap: 6px; font-size: 14px; letter-spacing: .2px; color: #333; }
</style>
